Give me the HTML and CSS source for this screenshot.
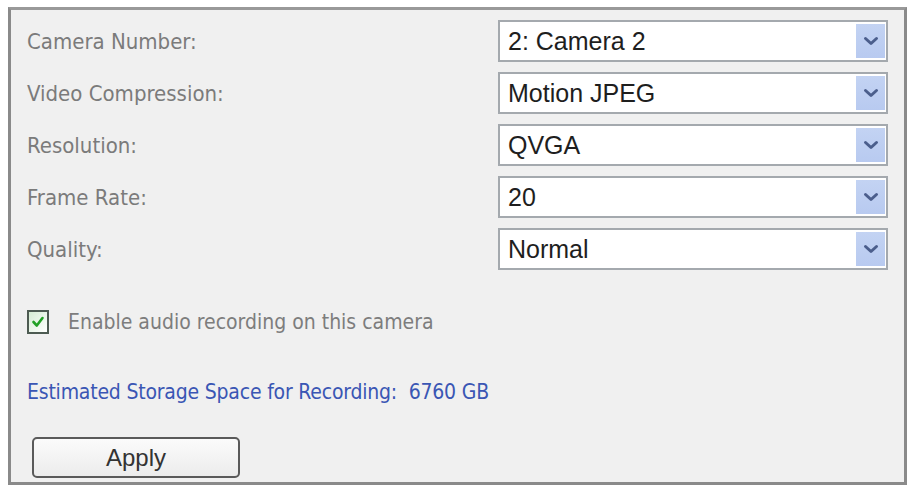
FILE: index.html
```html
<!DOCTYPE html>
<html>
<head>
<meta charset="utf-8">
<link rel="stylesheet" href="styles.css">
</head>
<body>
<div class="frame">
  <div class="rows">
    <div class="row">
      <div class="label">Camera Number:</div>
      <div class="select"><span class="value">2: Camera 2</span><span class="arrow"><svg width="16" height="10" viewBox="0 0 16 10"><path d="M2.5 2.5 L8 7.5 L13.5 2.5" fill="none" stroke="#4b5e8c" stroke-width="3" stroke-linecap="round" stroke-linejoin="round"/></svg></span></div>
    </div>
    <div class="row">
      <div class="label">Video Compression:</div>
      <div class="select"><span class="value">Motion JPEG</span><span class="arrow"><svg width="16" height="10" viewBox="0 0 16 10"><path d="M2.5 2.5 L8 7.5 L13.5 2.5" fill="none" stroke="#4b5e8c" stroke-width="3" stroke-linecap="round" stroke-linejoin="round"/></svg></span></div>
    </div>
    <div class="row">
      <div class="label">Resolution:</div>
      <div class="select"><span class="value">QVGA</span><span class="arrow"><svg width="16" height="10" viewBox="0 0 16 10"><path d="M2.5 2.5 L8 7.5 L13.5 2.5" fill="none" stroke="#4b5e8c" stroke-width="3" stroke-linecap="round" stroke-linejoin="round"/></svg></span></div>
    </div>
    <div class="row">
      <div class="label">Frame Rate:</div>
      <div class="select"><span class="value">20</span><span class="arrow"><svg width="16" height="10" viewBox="0 0 16 10"><path d="M2.5 2.5 L8 7.5 L13.5 2.5" fill="none" stroke="#4b5e8c" stroke-width="3" stroke-linecap="round" stroke-linejoin="round"/></svg></span></div>
    </div>
    <div class="row">
      <div class="label">Quality:</div>
      <div class="select"><span class="value">Normal</span><span class="arrow"><svg width="16" height="10" viewBox="0 0 16 10"><path d="M2.5 2.5 L8 7.5 L13.5 2.5" fill="none" stroke="#4b5e8c" stroke-width="3" stroke-linecap="round" stroke-linejoin="round"/></svg></span></div>
    </div>
  </div>
  <div class="check-row">
    <span class="checkbox"><svg width="16" height="16" viewBox="0 0 16 16"><path d="M3.5 8 L6.8 11.5 L12.5 4" fill="none" stroke="#21a124" stroke-width="2.6" stroke-linecap="round" stroke-linejoin="round"/></svg></span>
    <span class="check-label">Enable audio recording on this camera</span>
  </div>
  <div class="estimate">Estimated Storage Space for Recording:&nbsp; 6760 GB</div>
  <div class="actions"><button class="apply">Apply</button></div>
</div>
</body>
</html>
```

FILE: styles.css
```css
html, body {
  margin: 0;
  padding: 0;
  background: #ffffff;
}

.frame {
  box-sizing: border-box;
  margin: 7px 0 0 8px;
  width: 899px;
  height: 478px;
  border: 3px solid #8a8a8a;
  border-top-color: #999999;
  background: #f0f0f0;
  padding: 10px 16px 0 16px;
  display: flex;
  flex-direction: column;
}

.rows {
  display: flex;
  flex-direction: column;
  gap: 10px;
}

.row {
  display: flex;
  align-items: center;
  justify-content: space-between;
  height: 42px;
}

.label,
.check-label,
.estimate {
  font-family: "DejaVu Sans Condensed", "DejaVu Sans", sans-serif;
  font-stretch: condensed;
  font-size: 21px;
}

.label {
  color: #7b7b7b;
  font-size: 22px;
}

.select {
  box-sizing: border-box;
  width: 390px;
  height: 42px;
  border: 2px solid #a4a9ae;
  background: #ffffff;
  display: flex;
  align-items: center;
  justify-content: space-between;
  padding: 0 1px 0 8px;
}

.value {
  font-family: "Liberation Sans", Arial, sans-serif;
  font-size: 25px;
  color: #1e1e1e;
}

.arrow {
  width: 29px;
  height: 34px;
  background: linear-gradient(#c3d3f3, #b8caf0);
  display: flex;
  align-items: center;
  justify-content: center;
}

.check-row {
  margin-top: 39px;
  height: 26px;
  display: flex;
  align-items: center;
  padding-left: 0;
}

.checkbox {
  box-sizing: border-box;
  width: 22px;
  height: 24px;
  border: 2px solid #4d5b52;
  background: linear-gradient(135deg, #d5ecd3, #ffffff);
  display: flex;
  align-items: center;
  justify-content: center;
}

.check-label {
  margin-left: 19px;
  color: #7d7d7d;
}

.estimate {
  margin-top: 45px;
  line-height: 24px;
  color: #3a56b4;
  letter-spacing: -0.2px;
}

.actions {
  margin-top: 33px;
  padding-left: 5px;
}

.apply {
  box-sizing: border-box;
  width: 208px;
  height: 41px;
  border: 2px solid #5a5a5a;
  border-radius: 5px;
  background: linear-gradient(#fbfbfb, #ececec);
  font-family: "Liberation Sans", Arial, sans-serif;
  font-size: 24px;
  color: #333333;
  padding: 0;
}
```
